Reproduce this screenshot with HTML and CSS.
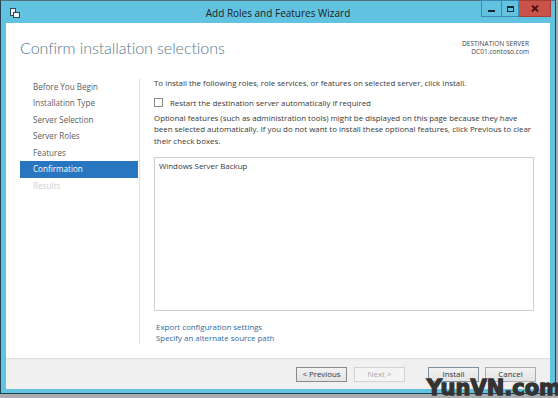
FILE: index.html
```html
<!DOCTYPE html>
<html>
<head>
<meta charset="utf-8">
<link rel="stylesheet" href="styles.css">
</head>
<body>
<div class="window">
  <div class="titlebar">
    <svg class="app-icon" width="10" height="10" viewBox="0 0 10 10">
      <rect x="0.5" y="0.5" width="5" height="7" fill="#e8f4fa" stroke="#2c4a5a" stroke-width="1"/>
      <rect x="3.5" y="4.5" width="6" height="5" fill="#f4f4f4" stroke="#2c4a5a" stroke-width="1"/>
    </svg>
    <div class="title">Add Roles and Features Wizard</div>
    <div class="controls">
      <div class="ctl ctl-min"><span class="min-glyph"></span></div>
      <div class="ctl ctl-max"><span class="max-glyph"></span></div>
      <div class="ctl ctl-close">
        <svg width="8" height="7" viewBox="0 0 8 7"><path d="M1 0.5 L7 6.5 M7 0.5 L1 6.5" stroke="#4a1010" stroke-width="1.8"/></svg>
      </div>
    </div>
  </div>
  <div class="client">
    <div class="header">
      <h1 class="heading">Confirm installation selections</h1>
      <div class="dest">
        <div>DESTINATION SERVER</div>
        <div>DC01.contoso.com</div>
      </div>
    </div>
    <div class="body">
      <nav class="nav">
        <div class="nav-item">Before You Begin</div>
        <div class="nav-item">Installation Type</div>
        <div class="nav-item">Server Selection</div>
        <div class="nav-item">Server Roles</div>
        <div class="nav-item">Features</div>
        <div class="nav-item active">Confirmation</div>
        <div class="nav-item disabled">Results</div>
      </nav>
      <div class="content">
        <p class="intro">To install the following roles, role services, or features on selected server, click Install.</p>
        <label class="check"><span class="box"></span>Restart the destination server automatically if required</label>
        <p class="optional">Optional features (such as administration tools) might be displayed on this page because they have been selected automatically. If you do not want to install these optional features, click Previous to clear their check boxes.</p>
        <div class="list">
          <div class="list-item">Windows Server Backup</div>
        </div>
        <div class="links">
          <a class="link">Export configuration settings</a>
          <a class="link">Specify an alternate source path</a>
        </div>
      </div>
    </div>
    <div class="footer">
      <button class="btn btn-focus">&lt; Previous</button>
      <button class="btn btn-disabled">Next &gt;</button>
      <button class="btn btn-default btn-install">Install</button>
      <button class="btn">Cancel</button>
    </div>
  </div>
</div>
<div class="watermark">YunVN.com</div>
</body>
</html>
```

FILE: styles.css
```css
html, body {
  margin: 0;
  padding: 0;
}
body {
  width: 558px;
  height: 398px;
  background: #a9adb0;
  overflow: hidden;
  position: relative;
  font-family: "Open Sans", "Noto Sans", sans-serif;
}
.window {
  box-sizing: border-box;
  width: 556px;
  height: 394px;
  border: 1px solid #22424f;
  border-top-color: #55707c;
  background: #62c3e1;
  padding: 0 5px 4px 5px;
  display: flex;
  flex-direction: column;
}
.titlebar {
  height: 22px;
  display: flex;
  align-items: center;
  position: relative;
  padding-top: 1px;
  box-sizing: border-box;
}
.app-icon {
  margin-left: 4px;
  margin-top: 1px;
}
.title {
  position: absolute;
  left: 0;
  right: 0;
  top: 5px;
  text-align: center;
  font-size: 10px;
  color: #1b1b1b;
}
.controls {
  position: absolute;
  right: -1px;
  top: -1px;
  display: flex;
  height: 17px;
}
.ctl {
  height: 17px;
  box-sizing: border-box;
  border: 1px solid #3a8db0;
  display: flex;
  align-items: center;
  justify-content: center;
  background: #62c3e1;
}
.ctl-min { width: 20px; border-right: none; }
.ctl-max { width: 18px; }
.ctl-close {
  width: 32px;
  background: #c9524a;
  border-color: #a63e36;
  border-left: none;
}
.min-glyph {
  width: 7px;
  height: 2px;
  background: #152a33;
  margin-top: 5px;
}
.max-glyph {
  width: 5px;
  height: 3px;
  border: 1px solid #152a33;
  border-top-width: 2px;
}
.client {
  flex: 1;
  background: #ffffff;
  display: flex;
  flex-direction: column;
}
.header {
  height: 55px;
  display: flex;
  justify-content: space-between;
  padding: 0 21px 0 14px;
}
.heading {
  margin: 15px 0 0 0;
  font-family: "Lato", "Open Sans", sans-serif;
  font-weight: 300;
  font-size: 16.1px;
  color: #587a8e;
  letter-spacing: -0.1px;
}
.dest {
  margin-top: 17px;
  text-align: right;
  font-size: 6.6px;
  line-height: 8.5px;
  color: #444;
}
.body {
  flex: 1;
  display: flex;
  padding-bottom: 14px;
}
.nav {
  width: 118px;
  margin-left: 14px;
  padding-right: 1px;
  padding-top: 1px;
  border-right: 1px solid #e2e2e2;
}
.nav-item {
  height: 16.5px;
  line-height: 16.5px;
  padding-left: 13px;
  font-size: 8.1px;
  color: #5c5c5c;
}
.nav-item.active {
  background: #2876bf;
  color: #ffffff;
}
.nav-item.disabled {
  color: #cdcdcd;
}
.content {
  flex: 1;
  padding: 0 16px 0 14px;
  display: flex;
  flex-direction: column;
  font-size: 7.9px;
  color: #383838;
}
.intro {
  margin: 0;
  line-height: 11px;
}
.check {
  display: flex;
  align-items: center;
  margin-top: 9px;
  height: 10px;
}
.box {
  width: 7px;
  height: 7px;
  border: 1px solid #8c8c8c;
  background: #fff;
  margin-right: 7px;
}
.optional {
  margin: 5px 0 0 0;
  line-height: 11.5px;
}
.list {
  margin-top: 10px;
  height: 154px;
  border: 1px solid #cfcfcf;
  box-sizing: border-box;
  padding: 3px 4px;
}
.list-item {
  line-height: 11px;
}
.links {
  margin-top: 11px;
  display: flex;
  flex-direction: column;
  padding-left: 2px;
}
.link {
  line-height: 11px;
  color: #2f6b9e;
}
.footer {
  height: 30px;
  border-top: 1px solid #dcdcdc;
  background: #f0f0f0;
  display: flex;
  align-items: center;
  padding: 0 14px 0 0;
  justify-content: flex-end;
  gap: 7px;
}
.btn {
  width: 51px;
  height: 15px;
  box-sizing: border-box;
  padding: 0;
  margin: 0;
  font-family: "Open Sans", "Noto Sans", sans-serif;
  font-size: 7.9px;
  color: #333;
  background: linear-gradient(#f2f2f2, #e3e3e3);
  border: 1px solid #adadad;
  border-radius: 0;
}
.btn-focus {
  border-color: #8a8a8a;
}
.btn-disabled {
  color: #a8a8a8;
  border-color: #d2d2d2;
  background: #f4f4f4;
}
.btn-install {
  margin-left: 16px;
  border-color: #7f8f99;
}
.btn + .btn:last-child {
  margin-left: -1px;
}
.watermark {
  position: absolute;
  right: -3px;
  bottom: 1px;
  font-family: "DejaVu Sans", sans-serif;
  font-weight: bold;
  font-size: 21px;
  line-height: 18px;
  color: #333333;
  -webkit-text-stroke: 1.3px #333333;
  text-shadow: 0 0 1px #fff;
}
```
